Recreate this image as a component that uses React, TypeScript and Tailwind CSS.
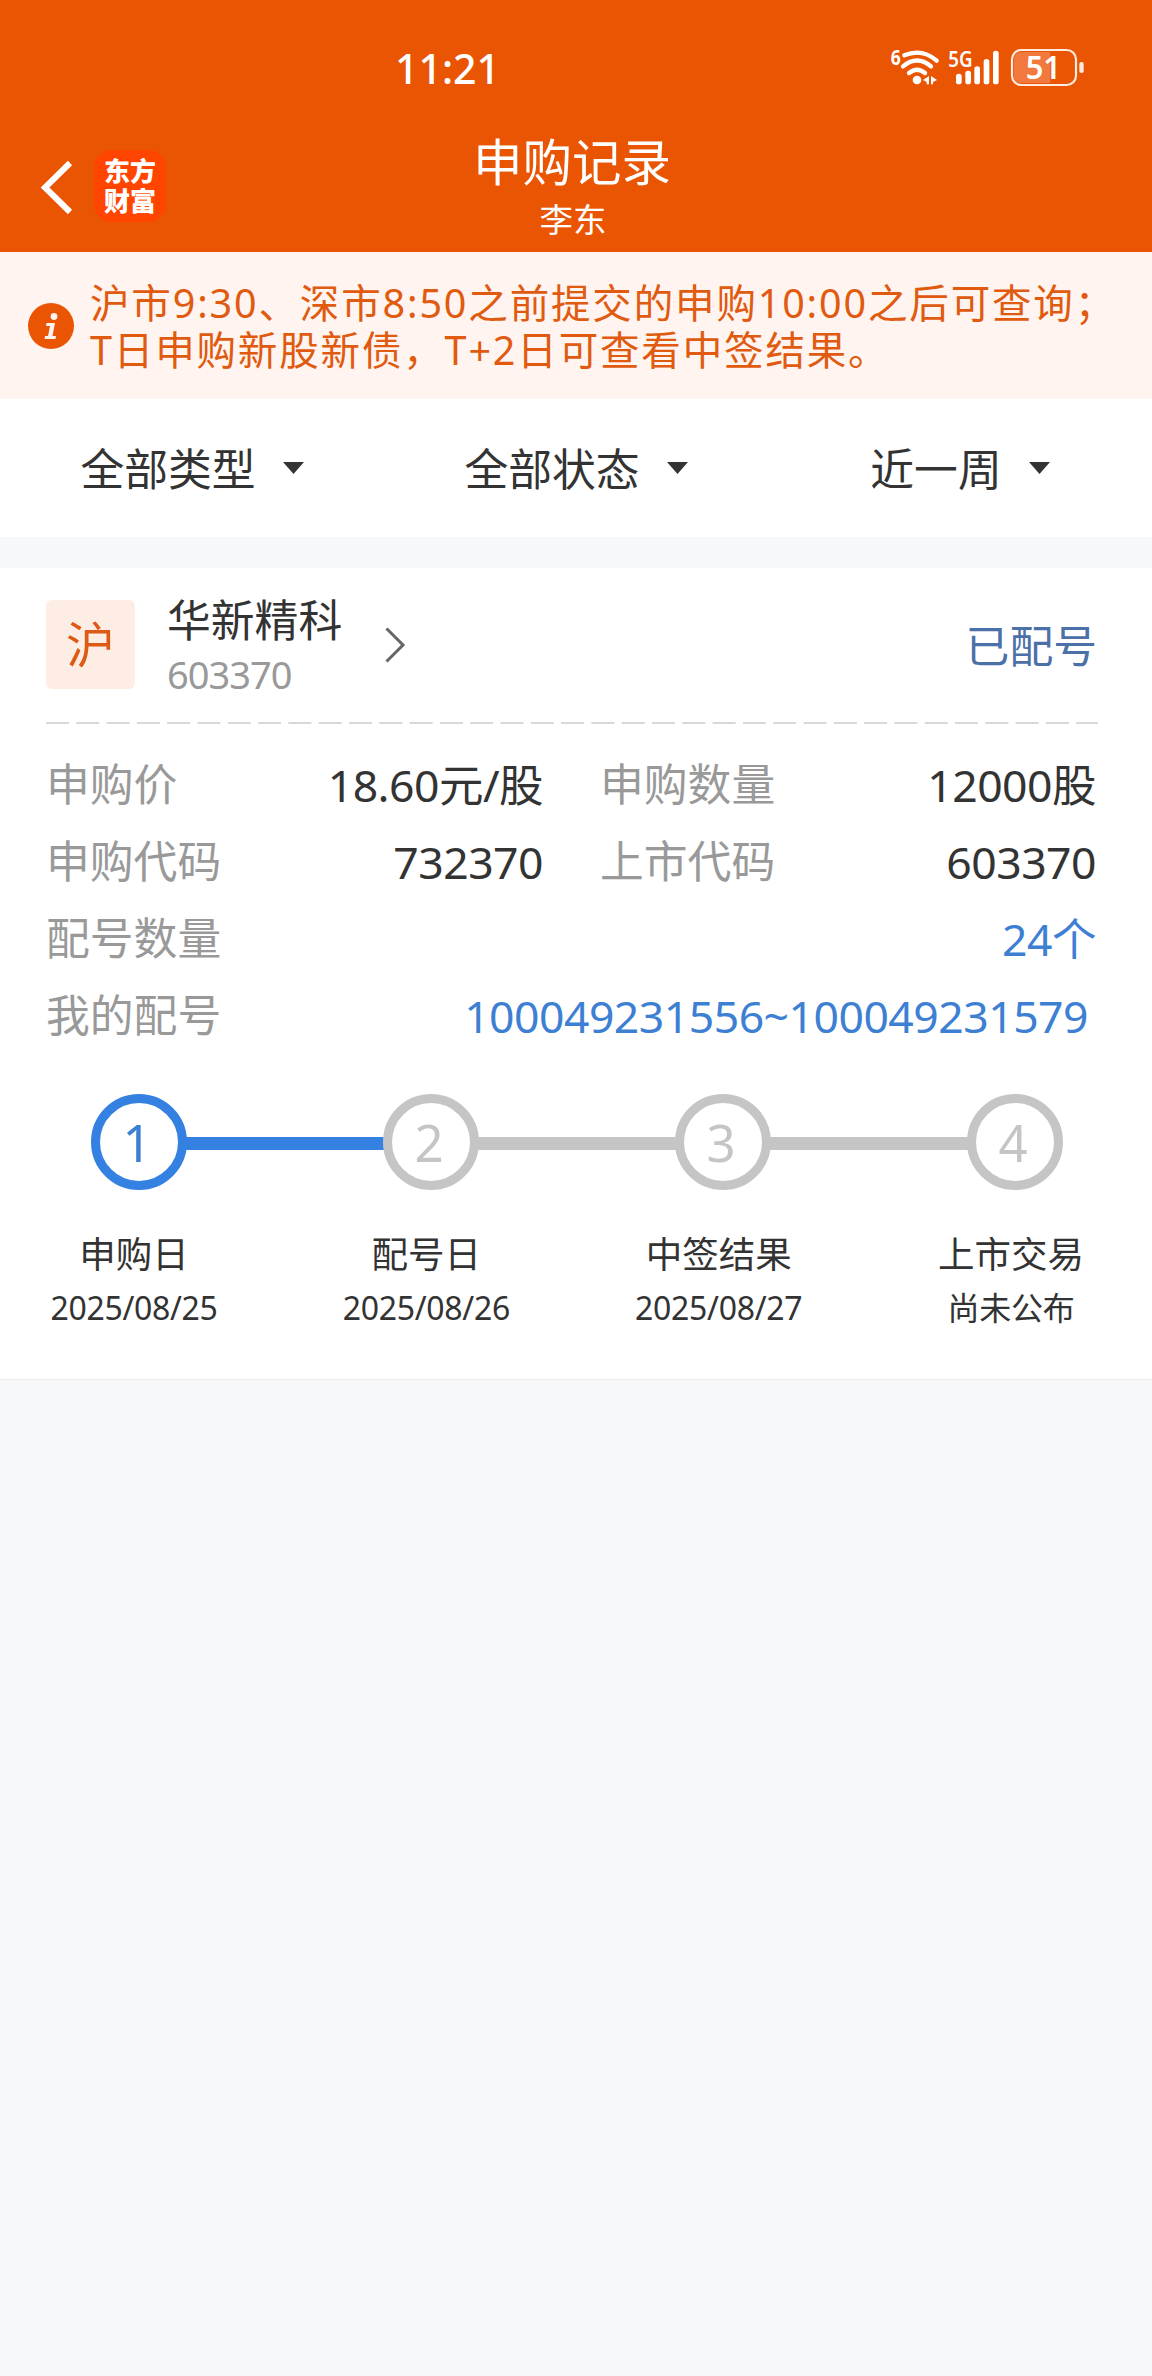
import clsx from 'clsx';

interface Step {
  title: string;
  date: string;
}

const filters = ['全部类型', '全部状态', '近一周'];

const steps: Step[] = [
  { title: '申购日', date: '2025/08/25' },
  { title: '配号日', date: '2025/08/26' },
  { title: '中签结果', date: '2025/08/27' },
  { title: '上市交易', date: '尚未公布' },
];

const currentStep = 1;

function StatusIcons() {
  return (
    <svg className="w-[260px] h-[80px]" viewBox="0 0 780 240" fill="none">
      {/* wifi */}
      <text x="92" y="105" fontSize="64" fontWeight="700" fill="#fff" textLength="30" lengthAdjust="spacingAndGlyphs">6</text>
      <g stroke="#fff" strokeWidth="13" strokeLinecap="round">
        <path d="M133 76 Q186 54 230 92" />
        <path d="M129 109 Q171 74 213 109" />
        <path d="M147 129 Q171 109 195 129" />
      </g>
      <circle cx="171" cy="150" r="13" fill="#fff" />
      <path d="M207 138 V163 H200 V156 L189 150 Z M213 138 L231 150 L219 156 V163 H213 Z" fill="#fff" />
      {/* signal */}
      <text x="265" y="110" fontSize="66" fontWeight="600" fill="#fff" textLength="73" lengthAdjust="spacingAndGlyphs">5G</text>
      <g fill="#fff">
        <rect x="288" y="131" width="17" height="32" rx="8" />
        <rect x="316" y="122" width="17" height="41" rx="8" />
        <rect x="343" y="109" width="17" height="54" rx="8" />
        <rect x="371" y="87" width="17" height="76" rx="8" />
        <rect x="399" y="62" width="17" height="101" rx="8" />
      </g>
      {/* battery */}
      <path d="M571 66 H484 Q462 66 462 88 V137 Q462 159 484 159 H571 Z" fill="#f1793d" />
      <rect x="456" y="60" width="192" height="105" rx="28" stroke="#ffece0" strokeWidth="6.5" />
      <rect x="658" y="96" width="13" height="33" rx="6" fill="#ffece0" />
      <text x="497" y="148" fontSize="96" fontWeight="600" fill="#fff" textLength="106" lengthAdjust="spacingAndGlyphs">51</text>
    </svg>
  );
}

function Header() {
  return (
    <header className="h-[252px] bg-[#ea5504] text-white">
      <div className="flex h-[130px] items-start justify-between pl-[395px] pr-8">
        <div className="mt-[42px] text-[41px] leading-[52px] font-medium">11:21</div>
        <div className="mt-[30px]">
          <StatusIcons />
        </div>
      </div>
      <div className="grid grid-cols-[1fr_auto_1fr]">
        <div className="flex items-start">
          <svg className="ml-[39px] mt-7 w-9 h-[60px]" viewBox="0 0 36 60" fill="none">
            <path d="M31 5 L6 29.5 L31 54" stroke="#fff" strokeWidth="6" />
          </svg>
          <div className="ml-[19px] mt-5 flex h-[72px] w-[72px] flex-col items-center justify-center rounded-[18px] bg-[#ff4500] text-[26px] leading-[30px] font-black">
            <span>东方</span>
            <span>财富</span>
          </div>
        </div>
        <div className="mr-2 text-center">
          <h1 className="text-[49.5px] leading-[64px]">申购记录</h1>
          <p className="mt-[3px] pl-0.5 text-[33.5px] leading-[44px]">李东</p>
        </div>
      </div>
    </header>
  );
}

function Notice() {
  return (
    <div className="flex h-[147px] items-center bg-[#fff4ef] pl-7 text-[#e05a10]">
      <svg className="mt-px h-[46px] w-[46px] shrink-0" viewBox="0 0 46 46">
        <circle cx="23" cy="23" r="23" fill="#ea5504" />
        <circle cx="26" cy="13.5" r="3.4" fill="#fff4ef" />
        <path d="M18.5 20 H27 L24.5 33 H28 L27.5 36 H16.5 L17 33 H20 L22 23 H18 Z" fill="#fff4ef" />
      </svg>
      <p className="ml-4 mt-[3px] whitespace-nowrap text-[39.5px] leading-[47.5px] tracking-[1.85px]">
        沪市9:30、深市8:50之前提交的申购10:00之后可查询；
        <br />
        T日申购新股新债，T+2日可查看中签结果。
      </p>
    </div>
  );
}

function FilterBar() {
  return (
    <div className="grid h-[138px] grid-cols-3 bg-white">
      {filters.map((label) => (
        <button key={label} className="flex items-center justify-center gap-[27px] text-[43.8px] leading-[60px]">
          <span className="pt-0.5">{label}</span>
          <svg className="w-[21px] h-3 -mt-px" viewBox="0 0 21 12">
            <path d="M0 0 H21 L10.5 12 Z" fill="#333" />
          </svg>
        </button>
      ))}
    </div>
  );
}

function Field({ label, value, className }: { label: string; value: string; className?: string }) {
  return (
    <div className="flex justify-between">
      <span className="text-[#999]">{label}</span>
      <span className={clsx('text-[44.5px] tracking-[-0.5px]', className)}>{value}</span>
    </div>
  );
}

function StepBar() {
  return (
    <div>
      <div className="mt-10 flex items-center pl-[91px] pr-[89px]">
        {steps.map((step, i) => {
          const active = i < currentStep;
          return (
            <div key={step.title} className={clsx('flex items-center', i > 0 && 'flex-1')}>
              {i > 0 && (
                <div className={clsx('-mx-px mt-[3px] h-[13px] flex-1', i === currentStep ? 'bg-[#3581e2]' : 'bg-[#c5c5c5]')} />
              )}
              <div
                className={clsx(
                  'flex h-24 w-24 shrink-0 items-center justify-center rounded-full border-[9px] bg-white pr-1 text-[51px] leading-none',
                  active ? 'border-[#3581e2] text-[#3d80d3]' : 'border-[#c5c5c5] text-[#c5c5c5]'
                )}
              >
                {i + 1}
              </div>
            </div>
          );
        })}
      </div>
      <div className="mt-[38px] flex justify-between pl-[50px] pr-[57px]">
        {steps.map((step) => (
          <div key={step.title} className="w-[168px] whitespace-nowrap text-center">
            <div className="text-[36.5px] leading-[52px]">{step.title}</div>
            <div className="mt-1 text-[32px] leading-[48px] tracking-[-0.3px]">{step.date}</div>
          </div>
        ))}
      </div>
    </div>
  );
}

function RecordCard() {
  return (
    <section className="mt-[31px] h-[812px] border-b border-[#ececec] bg-white">
      <div className="flex h-[154px] items-start px-[46px] pt-8">
        <div className="flex h-[89px] w-[89px] items-center justify-center rounded-md bg-[#fdede4] text-[49px] leading-none text-[#dc5a14]">
          沪
        </div>
        <div className="ml-8 -mt-2">
          <div className="text-[43.8px] leading-[56px]">华新精科</div>
          <div className="text-[38px] leading-[53px] tracking-[-1px] text-[#999]">603370</div>
        </div>
        <svg className="ml-[42px] mt-[27px] h-9 w-6" viewBox="0 0 24 36" fill="none">
          <path d="M2.5 1.5 L19 18 L2.5 34.5" stroke="#666" strokeWidth="3" />
        </svg>
        <div className="ml-auto mt-4 pr-[9px] text-[43.8px] leading-[60px] text-[#4c70a8]">已配号</div>
      </div>
      <svg className="mx-[46px] block h-0.5 w-[1052px]">
        <line x1="0" y1="1" x2="1052" y2="1" stroke="#ccc" strokeWidth="1.4" strokeDasharray="23 7.3" />
      </svg>
      <div className="mt-[22px] pl-[46px] pr-14 text-[43.8px] leading-[77px]">
        <div className="grid grid-cols-[497px_1fr] gap-x-[57px]">
          <Field label="申购价" value="18.60元/股" />
          <Field label="申购数量" value="12000股" />
          <Field label="申购代码" value="732370" />
          <Field label="上市代码" value="603370" />
        </div>
        <Field label="配号数量" value="24个" className="text-[#3d80d3]" />
        <Field label="我的配号" value="100049231556~100049231579" className="mr-2 text-[#3d80d3]" />
      </div>
      <StepBar />
    </section>
  );
}

export default function App() {
  return (
    <div
      lang="zh-CN"
      className="h-[2376px] w-[1152px] overflow-hidden bg-[#f6f8fa] font-['Noto_Sans','Noto_Sans_CJK_SC',sans-serif] text-[#333]"
    >
      <Header />
      <Notice />
      <FilterBar />
      <RecordCard />
    </div>
  );
}
